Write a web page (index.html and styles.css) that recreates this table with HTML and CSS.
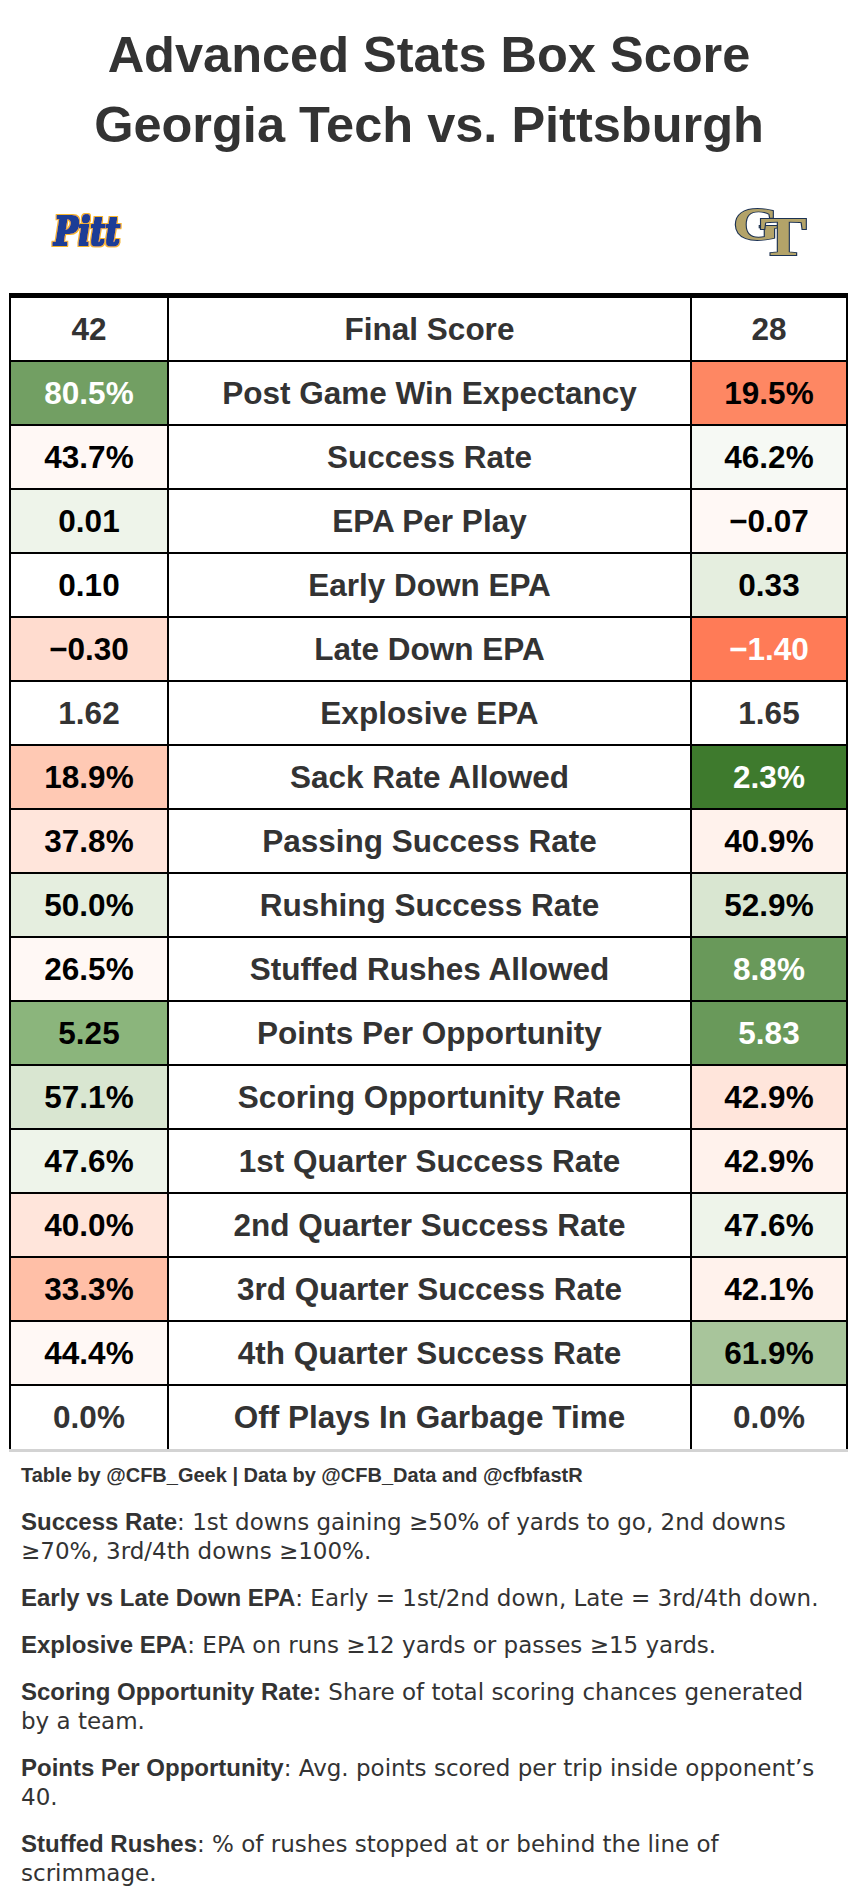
FILE: index.html
```html
<!DOCTYPE html>
<html lang="en">
<head>
<meta charset="utf-8">
<title>Advanced Stats Box Score</title>
<link rel="stylesheet" href="styles.css">
</head>
<body>
<header class="heading">
  <h1 class="title">Advanced Stats Box Score<br>Georgia Tech vs. Pittsburgh</h1>
  <div class="logos">
    <svg class="logo-pitt" width="76" height="42" viewBox="0 0 76 42" aria-label="Pitt">
      <defs>
        <filter id="pitt-outline" x="-10%" y="-20%" width="120%" height="140%">
          <feMorphology in="SourceAlpha" operator="dilate" radius="2.4" result="outer"/>
          <feFlood flood-color="#f6b52a" result="goldfill"/>
          <feComposite in="goldfill" in2="outer" operator="in" result="gold"/>
          <feMorphology in="SourceAlpha" operator="dilate" radius="0.9" result="inner"/>
          <feFlood flood-color="#1f3c96" result="bluefill"/>
          <feComposite in="bluefill" in2="inner" operator="in" result="blue"/>
          <feMerge><feMergeNode in="gold"/><feMergeNode in="blue"/></feMerge>
        </filter>
      </defs>
      <text x="4" y="33" class="pitt-text" filter="url(#pitt-outline)" textLength="66" lengthAdjust="spacingAndGlyphs">Pitt</text>
    </svg>
    <svg class="logo-gt" width="80" height="52" viewBox="0 0 80 52" aria-label="GT">
      <text class="gt-text" transform="scale(1.3 1)" x="1.5" y="33"><tspan class="gt-g">G</tspan><tspan class="gt-t" dx="-15" dy="15">T</tspan></text>
    </svg>
  </div>
</header>

<section class="box">
  <div class="row">
    <div class="cell val">42</div><div class="cell label">Final Score</div><div class="cell val">28</div>
  </div>
  <div class="row">
    <div class="cell val c-g5 light">80.5%</div><div class="cell label">Post Game Win Expectancy</div><div class="cell val c-r5 dark">19.5%</div>
  </div>
  <div class="row">
    <div class="cell val dark c-r0">43.7%</div><div class="cell label">Success Rate</div><div class="cell val dark c-g0">46.2%</div>
  </div>
  <div class="row">
    <div class="cell val dark c-g1">0.01</div><div class="cell label">EPA Per Play</div><div class="cell val dark c-r0">−0.07</div>
  </div>
  <div class="row">
    <div class="cell val dark">0.10</div><div class="cell label">Early Down EPA</div><div class="cell val dark c-g2">0.33</div>
  </div>
  <div class="row">
    <div class="cell val dark c-r2">−0.30</div><div class="cell label">Late Down EPA</div><div class="cell val light c-r6">−1.40</div>
  </div>
  <div class="row">
    <div class="cell val">1.62</div><div class="cell label">Explosive EPA</div><div class="cell val">1.65</div>
  </div>
  <div class="row">
    <div class="cell val dark c-r3">18.9%</div><div class="cell label">Sack Rate Allowed</div><div class="cell val light c-g7">2.3%</div>
  </div>
  <div class="row">
    <div class="cell val dark c-r2b">37.8%</div><div class="cell label">Passing Success Rate</div><div class="cell val dark c-r1">40.9%</div>
  </div>
  <div class="row">
    <div class="cell val dark c-g2">50.0%</div><div class="cell label">Rushing Success Rate</div><div class="cell val dark c-g3">52.9%</div>
  </div>
  <div class="row">
    <div class="cell val dark c-r0">26.5%</div><div class="cell label">Stuffed Rushes Allowed</div><div class="cell val light c-g6">8.8%</div>
  </div>
  <div class="row">
    <div class="cell val dark c-g4">5.25</div><div class="cell label">Points Per Opportunity</div><div class="cell val light c-g6">5.83</div>
  </div>
  <div class="row">
    <div class="cell val dark c-g3">57.1%</div><div class="cell label">Scoring Opportunity Rate</div><div class="cell val dark c-r2b">42.9%</div>
  </div>
  <div class="row">
    <div class="cell val dark c-g1">47.6%</div><div class="cell label">1st Quarter Success Rate</div><div class="cell val dark c-r1">42.9%</div>
  </div>
  <div class="row">
    <div class="cell val dark c-r2b">40.0%</div><div class="cell label">2nd Quarter Success Rate</div><div class="cell val dark c-g1">47.6%</div>
  </div>
  <div class="row">
    <div class="cell val dark c-r4">33.3%</div><div class="cell label">3rd Quarter Success Rate</div><div class="cell val dark c-r1">42.1%</div>
  </div>
  <div class="row">
    <div class="cell val dark c-r0">44.4%</div><div class="cell label">4th Quarter Success Rate</div><div class="cell val dark c-g4b">61.9%</div>
  </div>
  <div class="row last">
    <div class="cell val">0.0%</div><div class="cell label">Off Plays In Garbage Time</div><div class="cell val">0.0%</div>
  </div>
</section>

<footer class="notes">
  <p class="credit">Table by @CFB_Geek | Data by @CFB_Data and @cfbfastR</p>
  <p><b>Success Rate</b>: 1st downs gaining ≥50% of yards to go, 2nd downs ≥70%, 3rd/4th downs ≥100%.</p>
  <p><b>Early vs Late Down EPA</b>: Early = 1st/2nd down, Late = 3rd/4th down.</p>
  <p><b>Explosive EPA</b>: EPA on runs ≥12 yards or passes ≥15 yards.</p>
  <p><b>Scoring Opportunity Rate:</b> Share of total scoring chances generated by a team.</p>
  <p><b>Points Per Opportunity</b>: Avg. points scored per trip inside opponent’s 40.</p>
  <p><b>Stuffed Rushes</b>: % of rushes stopped at or behind the line of scrimmage.</p>
</footer>
</body>
</html>
```

FILE: styles.css
```css
html, body {
  margin: 0;
  padding: 0;
  background: #ffffff;
}

body {
  width: 858px;
  font-family: "Liberation Sans", Arial, sans-serif;
  color: #333333;
}

.heading {
  padding-top: 20px;
}

.title {
  margin: 0;
  font-size: 50.5px;
  line-height: 70px;
  font-weight: 700;
  text-align: center;
  color: #333333;
}

.logos {
  display: flex;
  justify-content: space-between;
  align-items: center;
  height: 52px;
  margin-top: 47px;
  padding: 0 47px 0 50px;
}

.logo-pitt, .logo-gt {
  display: block;
  overflow: visible;
}

.pitt-text {
  font-family: "DejaVu Serif", "Liberation Serif", serif;
  font-style: italic;
  font-weight: 700;
  font-size: 40px;
  fill: #1f3c96;
}

.gt-text {
  font-family: "Liberation Serif", serif;
  font-weight: 700;
  fill: #b3a369;
  stroke: #1c3253;
  stroke-width: 1.8px;
  paint-order: stroke;
}

.gt-g { font-size: 46px; }
.gt-t { font-size: 54px; }

.box {
  width: 839px;
  margin: 34px 0 0 9px;
  border-top: 5px solid #000000;
  border-bottom: 3px solid #d3d3d3;
}

.row {
  display: grid;
  grid-template-columns: 158px 523px 158px;
  height: 64px;
  box-sizing: border-box;
  border-bottom: 2px solid #000000;
}

.row.last {
  height: 63px;
  border-bottom: none;
}

.cell {
  display: flex;
  align-items: center;
  justify-content: center;
  border-left: 2px solid #000000;
  font-size: 31.5px;
  font-weight: 700;
  color: #333333;
}

.cell:last-child {
  border-right: 2px solid #000000;
}

.label {
  color: #333333;
}

.dark { color: #000000; }
.light { color: #ffffff; }

/* green scale */
.c-g0 { background: #f6f9f4; }
.c-g1 { background: #eef4ea; }
.c-g2 { background: #e5eedf; }
.c-g3 { background: #d9e6d1; }
.c-g4 { background: #8bb57c; }
.c-g4b { background: #a8c59b; }
.c-g5 { background: #729f63; }
.c-g6 { background: #69995a; }
.c-g7 { background: #3e7a2d; }

/* red scale */
.c-r0 { background: #fff8f5; }
.c-r1 { background: #fff2ec; }
.c-r2 { background: #ffdccf; }
.c-r2b { background: #ffe5db; }
.c-r3 { background: #ffc9b4; }
.c-r4 { background: #ffbfa7; }
.c-r5 { background: #fe8763; }
.c-r6 { background: #ff7b57; }

.notes {
  padding: 9px 25px 0 21px;
  font-family: "DejaVu Sans", "Liberation Sans", sans-serif;
  font-size: 23px;
  line-height: 29px;
  color: #333333;
}

.notes p {
  margin: 0 0 17px 0;
}

.notes b {
  font-family: "Liberation Sans", Arial, sans-serif;
  font-size: 24px;
  font-weight: 700;
}

.credit {
  font-family: "Liberation Sans", Arial, sans-serif;
  font-size: 20px;
  font-weight: 700;
}
```
